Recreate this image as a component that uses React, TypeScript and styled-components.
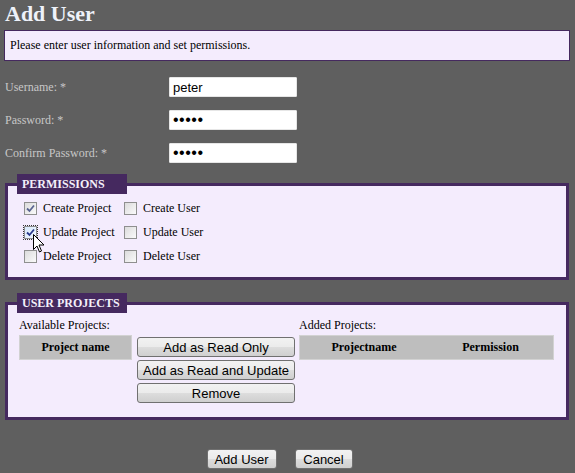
import styled, { createGlobalStyle } from 'styled-components'

const Global = createGlobalStyle`
    html, body {
        margin: 0;
        padding: 0;
        background: #5f5f5f;
    }
    body {
        font-family: "Liberation Serif", "Times New Roman", serif;
        font-size: 12px;
    }
`

const Page = styled.div`
    width: 575px;
    height: 473px;
    padding: 0 5px;
    box-sizing: border-box;
    position: relative;
`

const Title = styled.h1`
    margin: 0;
    padding-top: 1px;
    height: 29px;
    font-size: 22px;
    font-weight: bold;
    color: #eef2fa;
    line-height: 26px;
`

const InfoBox = styled.div`
    margin-left: -1px;
    width: 566px;
    height: 31px;
    box-sizing: border-box;
    border: 1px solid #45295f;
    background: #f4ecfd;
    color: #000;
    padding: 0 5px;
    line-height: 28px;
    font-size: 12px;
`

const Form = styled.div`
    margin-top: 16px;
    display: grid;
    grid-template-columns: 164px 128px;
    row-gap: 13px;
    align-items: center;
`

const Label = styled.label`
    color: #c7c7c7;
    font-size: 12px;
`

const Input = styled.input<{ $pw?: boolean }>`
    width: 128px;
    height: 20px;
    box-sizing: border-box;
    border: 1px solid #e6e6e6;
    border-radius: 1px;
    padding: 0 3px;
    font-family: "Liberation Sans", Arial, sans-serif;
    font-size: ${({ $pw }) => ($pw ? '16px' : '13px')};
    letter-spacing: ${({ $pw }) => ($pw ? '0.5px' : '0')};
    color: #000;
    background: #fff;
    outline: none;
`

const Fieldset = styled.fieldset<{ $h: number; $mt: number }>`
    margin: ${({ $mt }) => $mt}px 0 0 0;
    width: 564px;
    height: ${({ $h }) => $h}px;
    box-sizing: border-box;
    border: 3px solid #45295f;
    background: #f4ecfd;
    padding: 0 11px;
    position: relative;
`

const Legend = styled.legend`
    background: #45295f;
    color: #f4f0fa;
    font-weight: bold;
    font-size: 12px;
    height: 20px;
    line-height: 20px;
    padding: 0 5px;
    margin-left: -2px;
    width: 110px;
    box-sizing: border-box;
    white-space: nowrap;
`

const CheckGrid = styled.div`
    display: grid;
    grid-template-columns: 100px 100px;
    row-gap: 4px;
    margin: 4px 0 0 5px;
`

const CheckRow = styled.label`
    display: flex;
    align-items: center;
    height: 20px;
    color: #000;
    font-size: 12px;
    gap: 6px;
`

const Box = styled.span<{ $focus?: boolean }>`
    width: 13px;
    height: 13px;
    box-sizing: border-box;
    border: 1px solid #8f8f8f;
    background: ${({ $focus }) => ($focus ? 'linear-gradient(135deg, #d6e8fb, #f2f8ff)' : 'linear-gradient(135deg, #dcdcdc, #fafafa)')};
    outline: ${({ $focus }) => ($focus ? '1px dotted #333' : 'none')};
    display: inline-flex;
    align-items: center;
    justify-content: center;
    flex-shrink: 0;
`

const Columns = styled.div`
    display: flex;
    margin-top: 5px;
`

const Side = styled.div<{ $w: number; $ml?: number }>`
    width: ${({ $w }) => $w}px;
    margin-left: ${({ $ml }) => $ml ?? 0}px;
    display: flex;
    flex-direction: column;
`

const SubLabel = styled.div`
    color: #000;
    font-size: 12px;
    height: 17px;
    line-height: 14px;
`

const HeadRow = styled.div`
    display: flex;
    height: 25px;
    box-sizing: border-box;
    background: #bebebe;
    border: 1px solid #d2d2d2;
`

const HeadCell = styled.div<{ $w?: number }>`
    flex: ${({ $w }) => ($w ? `0 0 ${$w}px` : 1)};
    text-align: center;
    font-weight: bold;
    font-size: 12px;
    line-height: 22px;
    color: #000;
`

const ButtonStack = styled.div`
    width: 158px;
    margin-left: 5px;
    margin-top: 19px;
    display: flex;
    flex-direction: column;
    gap: 3px;
`

const Button = styled.button<{ $w?: number }>`
    width: ${({ $w }) => ($w ? `${$w}px` : '100%')};
    height: 20px;
    box-sizing: border-box;
    border: 1px solid #707070;
    border-radius: 3px;
    background: linear-gradient(to bottom, #f2f2f2 0%, #ebebeb 50%, #dddddd 51%, #cfcfcf 100%);
    font-family: "Liberation Sans", Arial, sans-serif;
    font-size: 13px;
    color: #000;
    padding: 0;
    line-height: 17px;
`

const Footer = styled.div`
    display: flex;
    justify-content: center;
    gap: 18px;
    margin-top: 29px;
    padding-right: 16px;
`

const Cursor = styled.svg`
    position: absolute;
    left: 33px;
    top: 234px;
`

const Tick = ({ muted }: { muted?: boolean }) => (
    <svg width="9" height="9" viewBox="0 0 9 9">
        <path d="M1 4.5 L3.5 7 L8 1.5" fill="none" stroke={muted ? '#5a6491' : '#2a3a8c'} strokeWidth="1.8" />
    </svg>
)

const Check = ({ label, checked, focus, muted }: { label: string; checked?: boolean; focus?: boolean; muted?: boolean }) => (
    <CheckRow>
        <Box $focus={focus}>{checked && <Tick muted={muted} />}</Box>
        {label}
    </CheckRow>
)

const App = () => (
    <Page>
        <Global />
        <Title>Add User</Title>
        <InfoBox>Please enter user information and set permissions.</InfoBox>
        <Form>
            <Label>Username: *</Label>
            <Input defaultValue="peter" />
            <Label>Password: *</Label>
            <Input $pw type="password" defaultValue="peter" />
            <Label>Confirm Password: *</Label>
            <Input $pw type="password" defaultValue="peter" />
        </Form>
        <Fieldset $h={106} $mt={11}>
            <Legend>PERMISSIONS</Legend>
            <CheckGrid>
                <Check label="Create Project" checked muted />
                <Check label="Create User" />
                <Check label="Update Project" checked focus />
                <Check label="Update User" />
                <Check label="Delete Project" />
                <Check label="Delete User" />
            </CheckGrid>
        </Fieldset>
        <Fieldset $h={127} $mt={13}>
            <Legend>USER PROJECTS</Legend>
            <Columns>
                <Side $w={113}>
                    <SubLabel>Available Projects:</SubLabel>
                    <HeadRow>
                        <HeadCell>Project name</HeadCell>
                    </HeadRow>
                </Side>
                <ButtonStack>
                    <Button>Add as Read Only</Button>
                    <Button>Add as Read and Update</Button>
                    <Button>Remove</Button>
                </ButtonStack>
                <Side $w={255} $ml={4}>
                    <SubLabel>Added Projects:</SubLabel>
                    <HeadRow>
                        <HeadCell $w={128}>Projectname</HeadCell>
                        <HeadCell>Permission</HeadCell>
                    </HeadRow>
                </Side>
            </Columns>
        </Fieldset>
        <Footer>
            <Button $w={70}>Add User</Button>
            <Button $w={58}>Cancel</Button>
        </Footer>
        <Cursor width="12" height="19" viewBox="0 0 12 19">
            <path d="M0.5 0.5 L0.5 15.5 L4 12 L6.5 18 L8.5 17 L6 11 L11 11 Z" fill="#fff" stroke="#000" strokeWidth="1" />
        </Cursor>
    </Page>
)

export default App
